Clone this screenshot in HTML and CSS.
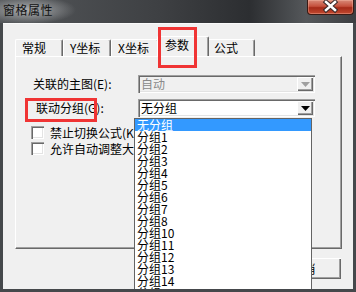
FILE: index.html
```html
<!DOCTYPE html>
<html lang="zh">
<head>
  <meta charset="UTF-8">
  <title>窗格属性</title>
  <link rel="stylesheet" href="styles.css">
</head>
<body>
  <div class="window">
    <div class="titlebar">
      <span class="title">窗格属性</span>
      <div class="close">
        <svg width="47" height="15" viewBox="0 0 47 15">
          <path d="M19 3 L28 11 M28 3 L19 11" stroke="#3a2a2a" stroke-width="4.5" stroke-linecap="square"/>
          <path d="M19 3 L28 11 M28 3 L19 11" stroke="#fff" stroke-width="2.5" stroke-linecap="square"/>
        </svg>
      </div>
    </div>

    <div class="client">
      <div class="tabs">
        <div class="tab">常规</div>
        <div class="tab">Y坐标</div>
        <div class="tab">X坐标</div>
        <div class="tab active">参数</div>
        <div class="tab">公式</div>
      </div>

      <div class="panel">
        <div class="row">
          <span class="label">关联的主图(E):</span>
          <div class="combo disabled">
            <span class="value">自动</span>
            <span class="arrow"><svg width="9" height="5" viewBox="0 0 9 5"><path d="M0 0 H9 L4.5 5 Z" fill="#a0a0a0"/></svg></span>
          </div>
        </div>
        <div class="row">
          <span class="label shifted">联动分组(G):</span>
          <div class="combo">
            <span class="value">无分组</span>
            <span class="arrow"><svg width="9" height="5" viewBox="0 0 9 5"><path d="M0 0 H9 L4.5 5 Z" fill="#000"/></svg></span>
          </div>
        </div>
        <div class="checks">
          <label class="check"><span class="box"></span>禁止切换公式(K)</label>
          <label class="check"><span class="box"></span>允许自动调整大小</label>
        </div>
      </div>

      <div class="buttons">
        <button>确定</button>
        <button>取消</button>
      </div>

      <div class="mark mark-tab"></div>
      <div class="mark mark-label"></div>

      <ul class="droplist">
        <li class="selected">无分组</li>
        <li>分组1</li>
        <li>分组2</li>
        <li>分组3</li>
        <li>分组4</li>
        <li>分组5</li>
        <li>分组6</li>
        <li>分组7</li>
        <li>分组8</li>
        <li>分组10</li>
        <li>分组11</li>
        <li>分组12</li>
        <li>分组13</li>
        <li>分组14</li>
        <li>分组15</li>
      </ul>
    </div>
  </div>
</body>
</html>
```

FILE: styles.css
```css
body {
  margin: 0;
  width: 356px;
  height: 292px;
  overflow: hidden;
  background: #45484b;
  font-family: "Noto Sans CJK SC", "Liberation Sans", sans-serif;
  font-size: 12px;
  color: #000;
}
.window {
  width: 356px;
  height: 292px;
}
.titlebar {
  height: 23px;
  display: flex;
  justify-content: space-between;
  align-items: flex-start;
  background:
    radial-gradient(ellipse 48px 14px at 28px 10px, rgba(190,192,194,0.85), rgba(190,192,194,0) 100%),
    linear-gradient(to right, #54575a, #3e4043 45%, #2c2e31 70%, #55585b 86%, #3c3e41);
}
.title {
  margin: 2px 0 0 3px;
  font-size: 12px;
  letter-spacing: 0.5px;
  line-height: 16px;
  color: #111;
}
.close {
  width: 47px;
  height: 15px;
  margin-right: 2px;
  box-sizing: border-box;
  border: 1px solid #3a1a14;
  border-top: none;
  border-radius: 0 0 4px 4px;
  background: linear-gradient(to bottom, #d98a78 0%, #c5503c 45%, #a52a18 55%, #c24a30 100%);
  box-shadow: inset 0 0 0 1px rgba(255,200,180,0.35);
}
.close svg {
  display: block;
  margin: -1px 0 0 -1px;
}
.client {
  position: relative;
  margin: 0 3px;
  height: 266px;
  background: #f0f0f0;
  border-top: 1px solid #fafafa;
  box-sizing: border-box;
  overflow: hidden;
}
.tabs {
  display: flex;
  margin: 15px 0 0 12px;
  height: 17px;
  align-items: flex-end;
}
.tab {
  width: 48px;
  height: 17px;
  box-sizing: border-box;
  padding-left: 6px;
  line-height: 16px;
  border-top: 1px solid #fff;
  border-left: 1px solid #fff;
  border-right: 1px solid #696969;
  box-shadow: inset -1px 0 #a0a0a0;
  border-radius: 2px 2px 0 0;
  background: #f0f0f0;
}
.tab.active {
  position: relative;
  z-index: 1;
  width: 52px;
  height: 20px;
  margin: 0 -2px;
  padding-left: 7px;
  line-height: 16px;
}
.panel {
  margin-left: 12px;
  width: 327px;
  height: 193px;
  box-sizing: border-box;
  border-top: 1px solid #fff;
  border-left: 1px solid #fff;
  border-right: 1px solid #696969;
  border-bottom: 1px solid #696969;
  box-shadow: inset -1px -1px #a0a0a0;
  padding: 18px 0 0 15px;
}
.row {
  display: flex;
  align-items: center;
  height: 18px;
  margin-bottom: 6px;
}
.label {
  width: 105px;
  padding-left: 2px;
  line-height: 18px;
}
.label.shifted {
  width: 102px;
  padding-left: 5px;
}
.combo {
  width: 177px;
  height: 18px;
  box-sizing: border-box;
  display: flex;
  justify-content: space-between;
  background: #fff;
  box-shadow: inset 1px 1px #a0a0a0, inset 2px 2px #696969, inset -1px -1px #fff, inset -2px -2px #e3e3e3;
  padding: 2px;
}
.combo.disabled {
  background: #f0f0f0;
  color: #8a8a8a;
}
.value {
  padding-left: 1px;
  line-height: 14px;
}
.arrow {
  width: 16px;
  height: 14px;
  box-sizing: border-box;
  display: flex;
  align-items: center;
  justify-content: center;
  background: #f0f0f0;
  box-shadow: inset 1px 1px #fff, inset -1px -1px #696969, inset -2px -2px #a0a0a0;
}
.checks {
  display: flex;
  flex-direction: column;
  gap: 3px;
  margin-top: 9px;
}
.check {
  display: flex;
  align-items: center;
  gap: 6px;
  height: 13px;
  line-height: 13px;
}
.box {
  width: 13px;
  height: 13px;
  box-sizing: border-box;
  background: #fff;
  box-shadow: inset 1px 1px #a0a0a0, inset 2px 2px #696969, inset -1px -1px #fff, inset -2px -2px #e3e3e3;
}
.buttons {
  display: flex;
  justify-content: flex-end;
  gap: 5px;
  margin: 9px 12px 0 0;
}
.buttons button {
  width: 75px;
  height: 21px;
  padding: 0;
  font-family: inherit;
  font-size: 12px;
  background: #f0f0f0;
  border: none;
  box-shadow: inset 1px 1px #fff, inset -1px -1px #696969, inset -2px -2px #a0a0a0;
}
.mark {
  position: absolute;
  border: 3px solid #f03434;
  box-sizing: border-box;
  z-index: 2;
}
.mark-tab {
  left: 155px;
  top: 3px;
  width: 39px;
  height: 41px;
}
.mark-label {
  left: 22px;
  top: 74px;
  width: 72px;
  height: 24px;
}
.droplist {
  position: absolute;
  left: 131px;
  top: 94px;
  width: 178px;
  height: 200px;
  margin: 0;
  padding: 0;
  list-style: none;
  box-sizing: border-box;
  border: 1px solid #646464;
  background: #fff;
  z-index: 3;
}
.droplist li {
  height: 12px;
  line-height: 12px;
  padding-left: 2px;
  overflow: visible;
}
.droplist li.selected {
  background: #3399ff;
  color: #fff;
}
```
